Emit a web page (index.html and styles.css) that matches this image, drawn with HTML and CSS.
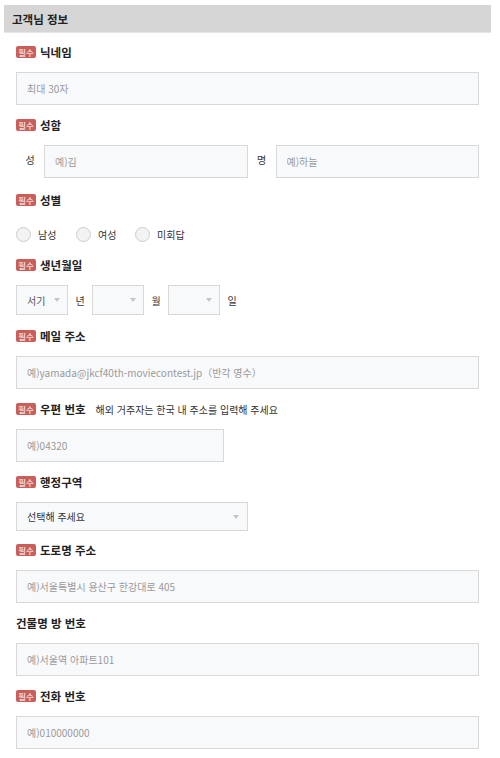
FILE: index.html
```html
<!DOCTYPE html>
<html lang="ko">
<head>
<meta charset="utf-8">
<title>고객님 정보</title>
<link rel="stylesheet" href="styles.css">
</head>
<body>
<div class="wrap">
  <div class="head">고객님 정보</div>
  <div class="content">
    <div class="field">
      <div class="label"><span class="badge">필수</span>닉네임</div>
      <input class="input" type="text" placeholder="최대 30자">
    </div>

    <div class="field field-name">
      <div class="label"><span class="badge">필수</span>성함</div>
      <div class="name-row">
        <span class="name-label">성</span>
        <input class="input grow" type="text" placeholder="예)김">
        <span class="name-label">명</span>
        <input class="input grow" type="text" placeholder="예)하늘">
      </div>
    </div>

    <div class="field field-radio">
      <div class="label"><span class="badge">필수</span>성별</div>
      <div class="radios">
        <span class="radio"><span class="circle"></span>남성</span>
        <span class="radio"><span class="circle"></span>여성</span>
        <span class="radio last"><span class="circle"></span>미회답</span>
      </div>
    </div>

    <div class="field field-birth">
      <div class="label"><span class="badge">필수</span>생년월일</div>
      <div class="birth-row">
        <div class="select small"><span class="sel-text muted">서기</span><span class="arrow"></span></div>
        <span class="unit">년</span>
        <div class="select small"><span class="sel-text"></span><span class="arrow"></span></div>
        <span class="unit">월</span>
        <div class="select small"><span class="sel-text"></span><span class="arrow"></span></div>
        <span class="unit">일</span>
      </div>
    </div>

    <div class="field">
      <div class="label"><span class="badge">필수</span>메일 주소</div>
      <input class="input" type="text" placeholder="예)yamada@jkcf40th-moviecontest.jp（반각 영수）">
    </div>

    <div class="field">
      <div class="label"><span class="badge">필수</span>우편 번호<span class="note">해외 거주자는 한국 내 주소를 입력해 주세요</span></div>
      <input class="input postal" type="text" placeholder="예)04320">
    </div>

    <div class="field field-region">
      <div class="label"><span class="badge">필수</span>행정구역</div>
      <div class="select region"><span class="sel-text">선택해 주세요</span><span class="arrow"></span></div>
    </div>

    <div class="field">
      <div class="label"><span class="badge">필수</span>도로명 주소</div>
      <input class="input" type="text" placeholder="예)서울특별시 용산구 한강대로 405">
    </div>

    <div class="field">
      <div class="label">건물명 방 번호</div>
      <input class="input" type="text" placeholder="예)서울역 아파트101">
    </div>

    <div class="field">
      <div class="label"><span class="badge">필수</span>전화 번호</div>
      <input class="input" type="text" placeholder="예)010000000">
    </div>
  </div>
</div>
</body>
</html>
```

FILE: styles.css
```css
* { box-sizing: border-box; }

body {
  margin: 0;
  background: #ffffff;
  font-family: "Noto Sans CJK KR", "Noto Sans", sans-serif;
  color: #222222;
}

.wrap {
  margin: 5px 0 0 4px;
  width: 487px;
}

.head {
  height: 28px;
  background: #d6d6d6;
  border-bottom: 1px solid #e6e6e6;
  padding-left: 8px;
  display: flex;
  align-items: center;
  font-size: 11.5px;
  font-weight: bold;
  color: #222;
}

.content {
  padding: 9px 12px 0;
}

.field { margin-bottom: 10px; }
.field-name { margin-bottom: 12px; }
.field-radio { margin-bottom: 7px; }
.field-birth { margin-bottom: 11px; }
.field-region { margin-bottom: 9px; }

.label {
  height: 20px;
  display: flex;
  align-items: center;
  font-size: 11.5px;
  font-weight: bold;
  color: #222;
  margin-bottom: 10px;
  white-space: nowrap;
}

.badge {
  width: 20px;
  height: 12px;
  background: #c95f5d;
  color: #fff;
  font-size: 8.5px;
  font-weight: normal;
  line-height: 12px;
  text-align: center;
  border-radius: 2px;
  margin-right: 4px;
}

.note {
  font-size: 10px;
  font-weight: normal;
  color: #333;
  margin-left: 10px;
}

.input {
  display: block;
  width: 100%;
  height: 33px;
  margin: 0;
  border: 1px solid #d8d8d8;
  background: #f8f9fb;
  padding: 0 10px;
  font-family: "Noto Sans CJK KR", "Noto Sans", sans-serif;
  font-size: 10px;
  color: #333;
  outline: none;
  border-radius: 0;
}
.input::placeholder { color: #9a9a9a; }

.postal { width: 208px; }

.name-row {
  display: flex;
  align-items: center;
}
.name-label {
  width: 28px;
  flex: none;
  text-align: center;
  font-size: 10px;
  color: #333;
  padding-bottom: 4px;
}
.grow { flex: 1; width: auto; min-width: 0; }

.radios {
  height: 28px;
  display: flex;
  align-items: center;
}
.radio {
  width: 60px;
  flex: none;
  display: flex;
  align-items: center;
  font-size: 10px;
  color: #333;
}
.radio:nth-child(2) { width: 59px; }
.radio.last { width: auto; }
.circle {
  width: 15px;
  height: 15px;
  border-radius: 50%;
  border: 1px solid #cccccc;
  background: #f3f3f3;
  margin-right: 7px;
  flex: none;
}

.birth-row {
  display: flex;
  align-items: center;
}
.unit {
  width: 24px;
  flex: none;
  text-align: center;
  font-size: 10px;
  color: #333;
}

.select {
  display: flex;
  align-items: center;
  justify-content: space-between;
  border: 1px solid #d8d8d8;
  background: #f8f9fb;
  padding: 0 7px 0 10px;
  font-size: 10px;
}
.select.small { width: 52px; height: 30px; flex: none; }
.select.region { width: 232px; height: 29px; padding-right: 8px; }
.sel-text { color: #333; }
.sel-text.muted { color: #555; }
.arrow {
  width: 0;
  height: 0;
  border-left: 3px solid transparent;
  border-right: 3px solid transparent;
  border-top: 4px solid #c4c4c4;
  flex: none;
}
```
